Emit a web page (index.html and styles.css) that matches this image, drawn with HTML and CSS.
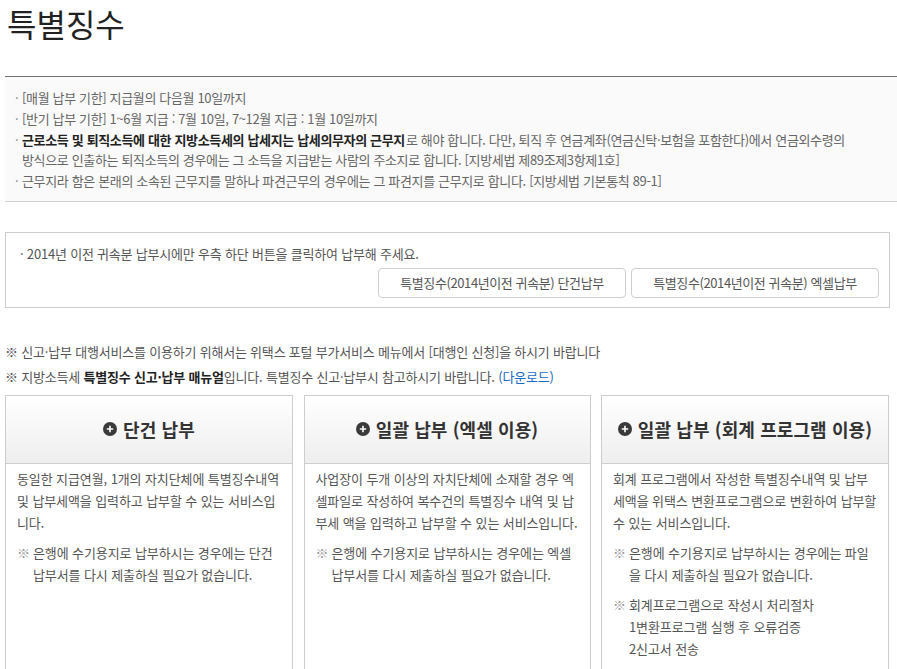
FILE: index.html
```html
<!DOCTYPE html>
<html lang="ko">
<head>
<meta charset="utf-8">
<title>특별징수</title>
<link rel="stylesheet" href="styles.css">
</head>
<body>
<div class="page">
  <h1 class="title">특별징수</h1>
  <div class="info">
    <p class="info-line"><span class="dot">·</span>[매월 납부 기한] 지급월의 다음월 10일까지</p>
    <p class="info-line"><span class="dot">·</span>[반기 납부 기한] 1~6월 지급 : 7월 10일, 7~12월 지급 : 1월 10일까지</p>
    <p class="info-line info-long"><span class="dot">·</span><strong>근로소득 및 퇴직소득에 대한 지방소득세의 납세지는 납세의무자의 근무지</strong>로 해야 합니다. 다만, 퇴직 후 연금계좌(연금신탁·보험을 포함한다)에서 연금외수령의 방식으로 인출하는 퇴직소득의 경우에는 그 소득을 지급받는 사람의 주소지로 합니다. [지방세법 제89조제3항제1호]</p>
    <p class="info-line"><span class="dot">·</span>근무지라 함은 본래의 소속된 근무지를 말하나 파견근무의 경우에는 그 파견지를 근무지로 합니다. [지방세법 기본통칙 89-1]</p>
  </div>

  <div class="old-box">
    <p class="old-text">· 2014년 이전 귀속분 납부시에만 우측 하단 버튼을 클릭하여 납부해 주세요.</p>
    <div class="old-buttons">
      <button class="btn" type="button">특별징수(2014년이전 귀속분) 단건납부</button>
      <button class="btn" type="button">특별징수(2014년이전 귀속분) 엑셀납부</button>
    </div>
  </div>

  <div class="notes">
    <p class="note">※ 신고·납부 대행서비스를 이용하기 위해서는 위택스 포털 부가서비스 메뉴에서 [대행인 신청]을 하시기 바랍니다</p>
    <p class="note">※ 지방소득세 <strong>특별징수 신고·납부 매뉴얼</strong>입니다. 특별징수 신고·납부시 참고하시기 바랍니다. <a class="link" href="#">(다운로드)</a></p>
  </div>

  <div class="cards">
    <div class="card">
      <div class="card-head"><span class="plus"><svg viewBox="0 0 14 14" width="14" height="14"><circle cx="7" cy="7" r="7" fill="#3a3a3a"/><path d="M7 3.8v6.4M3.8 7h6.4" stroke="#fff" stroke-width="1.6"/></svg></span>단건 납부</div>
      <div class="card-body">
        <p class="desc">동일한 지급연월, 1개의 자치단체에 특별징수내역 및 납부세액을 입력하고 납부할 수 있는 서비스입니다.</p>
        <p class="mark"><span class="mk">※</span><span>은행에 수기용지로 납부하시는 경우에는 단건 납부서를 다시 제출하실 필요가 없습니다.</span></p>
      </div>
    </div>
    <div class="card">
      <div class="card-head"><span class="plus"><svg viewBox="0 0 14 14" width="14" height="14"><circle cx="7" cy="7" r="7" fill="#3a3a3a"/><path d="M7 3.8v6.4M3.8 7h6.4" stroke="#fff" stroke-width="1.6"/></svg></span>일괄 납부 (엑셀 이용)</div>
      <div class="card-body">
        <p class="desc">사업장이 두개 이상의 자치단체에 소재할 경우 엑셀파일로 작성하여 복수건의 특별징수 내역 및 납부세 액을 입력하고 납부할 수 있는 서비스입니다.</p>
        <p class="mark"><span class="mk">※</span><span>은행에 수기용지로 납부하시는 경우에는 엑셀 납부서를 다시 제출하실 필요가 없습니다.</span></p>
      </div>
    </div>
    <div class="card">
      <div class="card-head"><span class="plus"><svg viewBox="0 0 14 14" width="14" height="14"><circle cx="7" cy="7" r="7" fill="#3a3a3a"/><path d="M7 3.8v6.4M3.8 7h6.4" stroke="#fff" stroke-width="1.6"/></svg></span>일괄 납부 (회계 프로그램 이용)</div>
      <div class="card-body">
        <p class="desc">회계 프로그램에서 작성한 특별징수내역 및 납부세액을 위택스 변환프로그램으로 변환하여 납부할 수 있는 서비스입니다.</p>
        <p class="mark"><span class="mk">※</span><span>은행에 수기용지로 납부하시는 경우에는 파일을 다시 제출하실 필요가 없습니다.</span></p>
        <p class="mark"><span class="mk">※</span><span>회계프로그램으로 작성시 처리절차<br>1변환프로그램 실행 후 오류검증<br>2신고서 전송</span></p>
      </div>
    </div>
  </div>
</div>
</body>
</html>
```

FILE: styles.css
```css
* { box-sizing: border-box; }
html, body { margin: 0; padding: 0; background: #fff; }
body {
  font-family: "Noto Sans CJK KR", "Noto Sans", sans-serif;
  color: #555;
  font-size: 13px;
}
p { margin: 0; }

.page {
  padding: 0 0 0 5px;
  width: 897px;
}

.title {
  margin: 0;
  padding: 0 0 0 2px;
  height: 76px;
  font-size: 32px;
  font-weight: 400;
  line-height: 46px;
  color: #222;
}

.info {
  width: 892px;
  border-top: 1px solid #707070;
  border-bottom: 1px solid #cfcfcf;
  background: #fafafa;
  padding: 11px 0 9px 10px;
}
.info-line {
  max-width: 862px;
  line-height: 20.75px;
  color: #666;
  letter-spacing: -0.35px;
  padding-left: 7px;
  text-indent: -7px;
}
.info-long { max-width: 832px; }
.info-line strong { color: #222; font-weight: 700; padding-right: 1px; }
.dot { display: inline-block; width: 7px; text-indent: 0; color: #888; }

.old-box {
  margin-top: 30px;
  width: 885px;
  border: 1px solid #cdcdcd;
  padding: 11px 10px 9px 14px;
}
.old-text {
  line-height: 20px;
  color: #555;
  letter-spacing: -0.2px;
}
.old-buttons {
  display: flex;
  justify-content: flex-end;
  gap: 5px;
  margin-top: 4px;
}
.btn {
  width: 248px;
  height: 30px;
  border: 1px solid #cfcfcf;
  border-radius: 4px;
  background: #fff;
  font-family: "Noto Sans CJK KR", "Noto Sans", sans-serif;
  font-size: 13px;
  color: #555;
  letter-spacing: -0.4px;
  padding: 0;
}

.notes {
  margin-top: 31px;
}
.note {
  line-height: 25px;
  color: #555;
  letter-spacing: -0.2px;
}
.note strong { color: #222; font-weight: 700; }
.link { color: #1a6bc2; text-decoration: none; }

.cards {
  margin-top: 6px;
  width: 884px;
  display: grid;
  grid-template-columns: 288px 287px 288px;
  column-gap: 10.5px;
}
.card {
  border: 1px solid #cdcdcd;
  height: 300px;
}
.card-head {
  height: 68px;
  border-bottom: 1px solid #cdcdcd;
  background: linear-gradient(#ffffff, #eeeeee);
  display: flex;
  align-items: center;
  justify-content: center;
  font-size: 18px;
  font-weight: 700;
  color: #333;
  letter-spacing: 0.1px;
}
.plus { display: inline-flex; margin-right: 6px; }
.card-body {
  padding: 4px 11px 0 11px;
}
.desc {
  line-height: 22px;
  color: #555;
  letter-spacing: -0.1px;
}
.mark {
  display: flex;
  margin-top: 8px;
  line-height: 22px;
  letter-spacing: -0.1px;
  color: #555;
}
.mk { flex: none; width: 16px; color: #999; }
```
